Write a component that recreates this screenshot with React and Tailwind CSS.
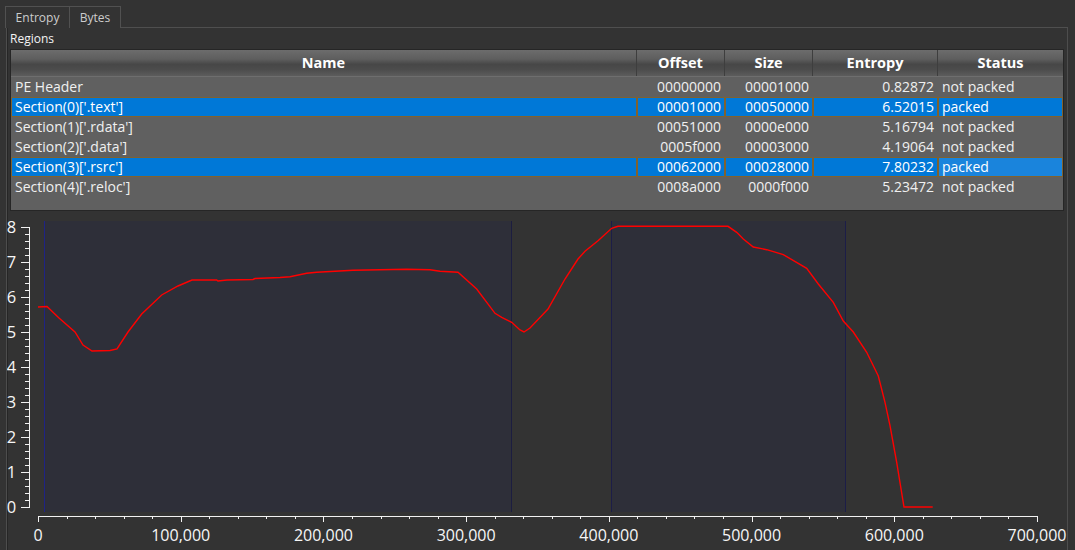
import React from "react";

const rows = [
  { name: "PE Header", offset: "00000000", size: "00001000", entropy: "0.82872", status: "not packed", sel: false },
  { name: "Section(0)['.text']", offset: "00001000", size: "00050000", entropy: "6.52015", status: "packed", sel: true },
  { name: "Section(1)['.rdata']", offset: "00051000", size: "0000e000", entropy: "5.16794", status: "not packed", sel: false },
  { name: "Section(2)['.data']", offset: "0005f000", size: "00003000", entropy: "4.19064", status: "not packed", sel: false },
  { name: "Section(3)['.rsrc']", offset: "00062000", size: "00028000", entropy: "7.80232", status: "packed", sel: true, hot: true },
  { name: "Section(4)['.reloc']", offset: "0008a000", size: "0000f000", entropy: "5.23472", status: "not packed", sel: false },
];

// page coords: x = 38 + bytes * 999/700000, y = 508 - entropy * 35
const curve = [
  [38, 308], [47, 307.5], [59, 319], [75, 333], [83, 346], [92, 352], [110, 351.5], [117, 350],
  [128, 333], [141.7, 315], [161.7, 296], [178, 287], [192, 281], [216.7, 281], [218, 282],
  [227, 281], [253, 280.5], [255, 279.5], [280, 278.5], [290, 277.7], [306.7, 274.3],
  [316.7, 273.3], [335, 272.3], [353, 271.3], [406.7, 270.3], [430, 270.7], [440, 272.3],
  [458, 273.3], [476.7, 290], [495, 314.3], [501.7, 318.3], [511.7, 323.3], [520, 331],
  [524, 333], [530, 329], [548, 310], [565, 280], [578, 260], [585, 252.3], [598, 241.7],
  [611.7, 229.3], [618, 227.3], [728, 227.3], [736.7, 233.3], [743.3, 240], [753.3, 248],
  [766.7, 250.7], [783.3, 255.7], [806.7, 269.3], [818.3, 285], [833.3, 303.3], [843.3, 322],
  [853.3, 333], [866.7, 353.3], [878.3, 377], [885, 403.3], [890, 426.7], [896.7, 463.3],
  [904, 508], [932.7, 508],
];

const xStep = 999 / 7;

function Chart() {
  const yTicks = [];
  for (let i = 0; i <= 40; i++) {
    const y = 228 + i * 7 + 0.5;
    const major = i % 5 === 0;
    yTicks.push(<line key={i} x1={major ? 21 : 25} x2={30} y1={y} y2={y} stroke="#f2f2f2" strokeWidth="1" />);
  }
  const xTicks = [];
  for (let i = 0; i <= 35; i++) {
    const x = Math.round(38 + (i * xStep) / 5) + 0.5;
    const major = i % 5 === 0;
    xTicks.push(<line key={i} x1={x} x2={x} y1={517} y2={major ? 523 : 520} stroke="#f2f2f2" strokeWidth="1" />);
  }
  const xLabels = ["0", "100,000", "200,000", "300,000", "400,000", "500,000", "600,000", "700,000"];

  return (
    <svg width="1061" height="338" viewBox="7 212 1061 338" className="block" style={{ fontFamily: "'Open Sans', sans-serif" }}>
      <rect x="44" y="222" width="467.5" height="291" fill="#2e2f39" />
      <rect x="611" y="222" width="234" height="291" fill="#2e2f39" />
      <line x1="44.5" x2="44.5" y1="222" y2="513" stroke="#1f2385" />
      <line x1="511.5" x2="511.5" y1="222" y2="513" stroke="#1c1d40" />
      <line x1="611.5" x2="611.5" y1="222" y2="513" stroke="#1c1d48" />
      <line x1="845.5" x2="845.5" y1="222" y2="513" stroke="#1c1d48" />

      <polyline points={curve.map((p) => p.join(",")).join(" ")} fill="none" stroke="#ff0000" strokeWidth="1.4" />

      <line x1="29.5" x2="29.5" y1="228" y2="509" stroke="#f2f2f2" />
      {yTicks}
      {[8, 7, 6, 5, 4, 3, 2, 1, 0].map((v, i) => (
        <text key={v} x="11.5" y={234 + i * 35} textAnchor="middle" fontSize="16.5" fill="#f6f6f6">{v}</text>
      ))}

      <line x1="38" x2="1038" y1="517.5" y2="517.5" stroke="#f2f2f2" />
      {xTicks}
      {xLabels.map((t, i) => (
        <text key={t} x={38 + i * xStep} y="542" textAnchor="middle" fontSize="16" fill="#f6f6f6">{t}</text>
      ))}
    </svg>
  );
}

function Cell({ w, sel, hot, align, children }) {
  const bg = sel ? (hot ? "bg-[#1a84dc]" : "bg-[#0078d7]") : "";
  const border = sel ? "border-[#80622f]" : "border-transparent";
  const al = align === "right" ? "justify-end" : "justify-start";
  return (
    <div className={`${w} h-[20px] flex items-center ${al} px-[3px] border ${border} ${bg} whitespace-nowrap`}>
      {children}
    </div>
  );
}

export default function App() {
  return (
    <div
      className="w-[1075px] h-[550px] bg-[#333333] overflow-hidden text-[#eaeaea]"
      style={{ fontFamily: "'Open Sans', 'Liberation Sans', sans-serif" }}
    >
      {/* tab strip */}
      <div className="flex items-end h-[28px] pl-[5px] pt-[6px]">
        <div className="w-[65px] h-[22px] pt-[1px] border-t border-l border-r border-[#515151] flex items-center justify-center text-[12px] text-[#cdcdcd]">
          Entropy
        </div>
        <div className="w-[51px] h-[22px] pt-[1px] border-t border-r border-[#515151] flex items-center justify-center text-[12px] text-[#cdcdcd]">
          Bytes
        </div>
        <div className="flex-1 h-[22px] border-b border-[#4f4f4f] mr-[7px]" />
      </div>

      {/* pane */}
      <div className="ml-[6px] w-[1062px] h-[522px] border-l border-r border-[#4d4d4d] shadow-[inset_1px_0_0_#262626]">
        <div className="pl-[3px] h-[21px] pt-[4px] text-[12px] leading-[14px] text-[#f4f4f4]">Regions</div>

        {/* regions table */}
        <div className="ml-[3px] w-[1054px] h-[162px] border border-[#262626] bg-[#606060] text-[14px] leading-[18px]">
          <div
            className="flex h-[27px] border-b border-[#6e6e6e] font-bold text-white text-[14.5px]"
            style={{ background: "linear-gradient(to bottom, #6c6c6c 0%, #5e5e5e 35%, #474747 55%, #4c4c4c 75%, #5c5c5c 100%)" }}
          >
            <div className="w-[626px] flex items-center justify-center border-r border-[#3e3e3e]">Name</div>
            <div className="w-[88px] flex items-center justify-center border-r border-[#3e3e3e]">Offset</div>
            <div className="w-[88px] flex items-center justify-center border-r border-[#3e3e3e]">Size</div>
            <div className="w-[125px] flex items-center justify-center border-r border-[#3e3e3e]">Entropy</div>
            <div className="w-[125px] flex items-center justify-center">Status</div>
          </div>
          {rows.map((r) => (
            <div key={r.name} className={`flex ${r.sel ? "text-white" : "text-[#f0f0f0]"}`}>
              <Cell w="w-[626px]" sel={r.sel}>{r.name}</Cell>
              <Cell w="w-[88px]" sel={r.sel} align="right">{r.offset}</Cell>
              <Cell w="w-[88px]" sel={r.sel} align="right">{r.size}</Cell>
              <Cell w="w-[125px]" sel={r.sel} align="right">{r.entropy}</Cell>
              <Cell w="w-[125px]" sel={r.sel} hot={r.hot}>{r.status}</Cell>
            </div>
          ))}
        </div>

        <Chart />
      </div>
    </div>
  );
}
